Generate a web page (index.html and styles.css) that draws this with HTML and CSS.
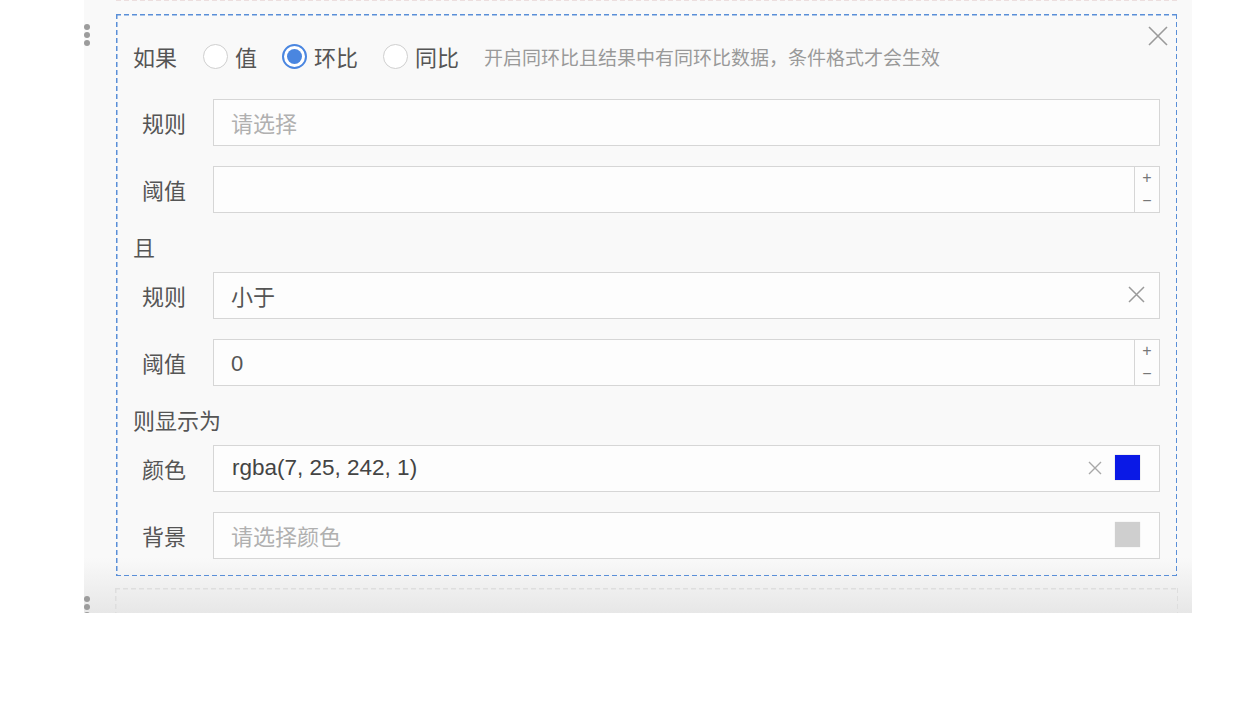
FILE: index.html
```html
<!DOCTYPE html>
<html lang="zh">
<head>
<meta charset="utf-8">
<title>条件格式</title>
<link rel="stylesheet" href="styles.css">
</head>
<body>
<div class="panel">
  <div class="prev-edge"></div>
  <div class="item">
    <div class="handle"><i></i><i></i><i></i></div>
    <div class="box active">
      <svg class="close" viewBox="0 0 20 20" width="20" height="20"><path d="M1 1L19 19M19 1L1 19" stroke="#9a9a9a" stroke-width="1.6" fill="none"/></svg>
      <div class="header">
        <span class="title">如果</span>
        <label class="radio"><span class="dot"></span>值</label>
        <label class="radio checked"><span class="dot"></span>环比</label>
        <label class="radio"><span class="dot"></span>同比</label>
        <span class="hint">开启同环比且结果中有同环比数据，条件格式才会生效</span>
      </div>
      <div class="field first">
        <span class="label">规则</span>
        <div class="input"><span class="placeholder">请选择</span></div>
      </div>
      <div class="field">
        <span class="label">阈值</span>
        <div class="input number"><span class="value"></span><div class="spin"><span>+</span><span>−</span></div></div>
      </div>
      <div class="section">且</div>
      <div class="field">
        <span class="label">规则</span>
        <div class="input"><span class="value grow">小于</span><svg class="clear" viewBox="0 0 17 17" width="17" height="17"><path d="M1 1L16 16M16 1L1 16" stroke="#9a9a9a" stroke-width="1.5" fill="none"/></svg></div>
      </div>
      <div class="field">
        <span class="label">阈值</span>
        <div class="input number"><span class="value grow">0</span><div class="spin"><span>+</span><span>−</span></div></div>
      </div>
      <div class="section">则显示为</div>
      <div class="field">
        <span class="label">颜色</span>
        <div class="input color"><span class="value grow latin">rgba(7, 25, 242, 1)</span><svg class="clear small" viewBox="0 0 14 14" width="14" height="14"><path d="M1 1L13 13M13 1L1 13" stroke="#a8a8a8" stroke-width="1.4" fill="none"/></svg><span class="swatch blue"></span></div>
      </div>
      <div class="field">
        <span class="label">背景</span>
        <div class="input color"><span class="placeholder grow">请选择颜色</span><span class="swatch gray"></span></div>
      </div>
    </div>
  </div>
  <div class="item next">
    <div class="handle"><i></i><i></i><i></i></div>
    <div class="box ghost"></div>
  </div>
</div>
</body>
</html>
```
FILE: styles.css
```css
* { box-sizing: border-box; }
html, body { margin: 0; padding: 0; background: #fff; }
body {
  font-family: "Liberation Sans", "Noto Sans CJK SC", sans-serif;
  color: #555;
  width: 1238px;
  height: 704px;
  overflow: hidden;
}
.panel {
  margin-left: 84px;
  width: 1108px;
  height: 613px;
  overflow: hidden;
  background: linear-gradient(to bottom, #f9f9f9 0, #f9f9f9 91%, #e7e7e7 100%);
}
.prev-edge {
  margin-left: 32px;
  width: 1061px;
  height: 1px;
  background: repeating-linear-gradient(to right, #ecdede 0 5px, transparent 5px 8px);
}
.item {
  display: flex;
  margin-top: 13px;
}
.handle {
  width: 32px;
  flex: none;
  display: flex;
  flex-direction: column;
  gap: 2px;
  padding-top: 10px;
}
.handle i {
  display: block;
  width: 6px;
  height: 6px;
  border-radius: 50%;
  background: #9c9c9c;
}
.box {
  width: 1061px;
  position: relative;
}
.box.active {
  padding: 22px 16px 16px 16px;
  border: 1px solid transparent;
}
.box.active::before,
.box.ghost::before {
  content: "";
  position: absolute;
  inset: -1px;
  pointer-events: none;
  background:
    repeating-linear-gradient(to right, var(--dash) 0 5px, transparent 5px 8px) top left / 100% 1.5px no-repeat,
    repeating-linear-gradient(to right, var(--dash) 0 5px, transparent 5px 8px) bottom left / 100% 1.5px no-repeat,
    repeating-linear-gradient(to bottom, var(--dash) 0 5px, transparent 5px 8px) top left / 1.5px 100% no-repeat,
    repeating-linear-gradient(to bottom, var(--dash) 0 5px, transparent 5px 8px) top right / 1.5px 100% no-repeat;
}
.box.active { --dash: #5a8fd8; }
.close {
  position: absolute;
  top: 11px;
  right: 8px;
}
.header {
  height: 38px;
  display: flex;
  align-items: center;
  font-size: 22px;
  color: #555;
}
.title { margin-right: 26px; }
.radio {
  display: flex;
  align-items: center;
  margin-right: 25px;
  color: #555;
}
.radio .dot {
  width: 25px;
  height: 25px;
  border-radius: 50%;
  border: 1.5px solid #cfcfcf;
  background: #fff;
  margin-right: 7px;
  display: flex;
  align-items: center;
  justify-content: center;
}
.radio.checked .dot {
  border: 2px solid #4a86e0;
}
.radio.checked .dot::after {
  content: "";
  width: 15px;
  height: 15px;
  border-radius: 50%;
  background: #4a86e0;
}
.hint {
  font-size: 19px;
  color: #999;
}
.field {
  display: flex;
  height: 47px;
  margin-top: 20px;
}
.field.first { margin-top: 24px; }
.section + .field { margin-top: 0; }
.label {
  width: 80px;
  flex: none;
  padding-left: 9px;
  padding-bottom: 2px;
  display: flex;
  align-items: center;
  font-size: 22px;
  color: #555;
}
.input {
  flex: 1;
  display: flex;
  align-items: center;
  border: 1px solid #d6d6d6;
  background: #fdfdfd;
  padding-left: 17px;
  padding-bottom: 2px;
  font-size: 22px;
}
.placeholder { color: #b0b0b0; }
.value { color: #555; }
.grow { flex: 1; }
.latin { color: #444; font-size: 22.5px; padding-left: 1px; }
.clear { margin-right: 14px; flex: none; }
.clear.small { margin-right: 13px; }
.input.number { padding-right: 0; padding-bottom: 0; }
.input.number .value { flex: 1; padding-top: 2px; }
.spin {
  width: 25px;
  height: 100%;
  border-left: 1px solid #d6d6d6;
  display: flex;
  flex-direction: column;
  font-size: 16px;
  color: #777;
}
.spin span {
  flex: 1;
  display: flex;
  align-items: center;
  justify-content: center;
  line-height: 1;
}
.input.color { padding-right: 19px; }
.swatch {
  width: 25px;
  height: 25px;
  flex: none;
}
.swatch.blue { background: #0a19e6; box-shadow: 0 0 1px rgba(0,0,0,0.3); }
.swatch.gray { background: #cfcfcf; box-shadow: 0 0 1px rgba(0,0,0,0.15); }
.section {
  margin-top: 20px;
  height: 39px;
  line-height: 32px;
  font-size: 22px;
  color: #555;
}
.item.next .handle { padding-top: 7px; }
.box.ghost {
  height: 60px;
  --dash: #dedede;
}
```
